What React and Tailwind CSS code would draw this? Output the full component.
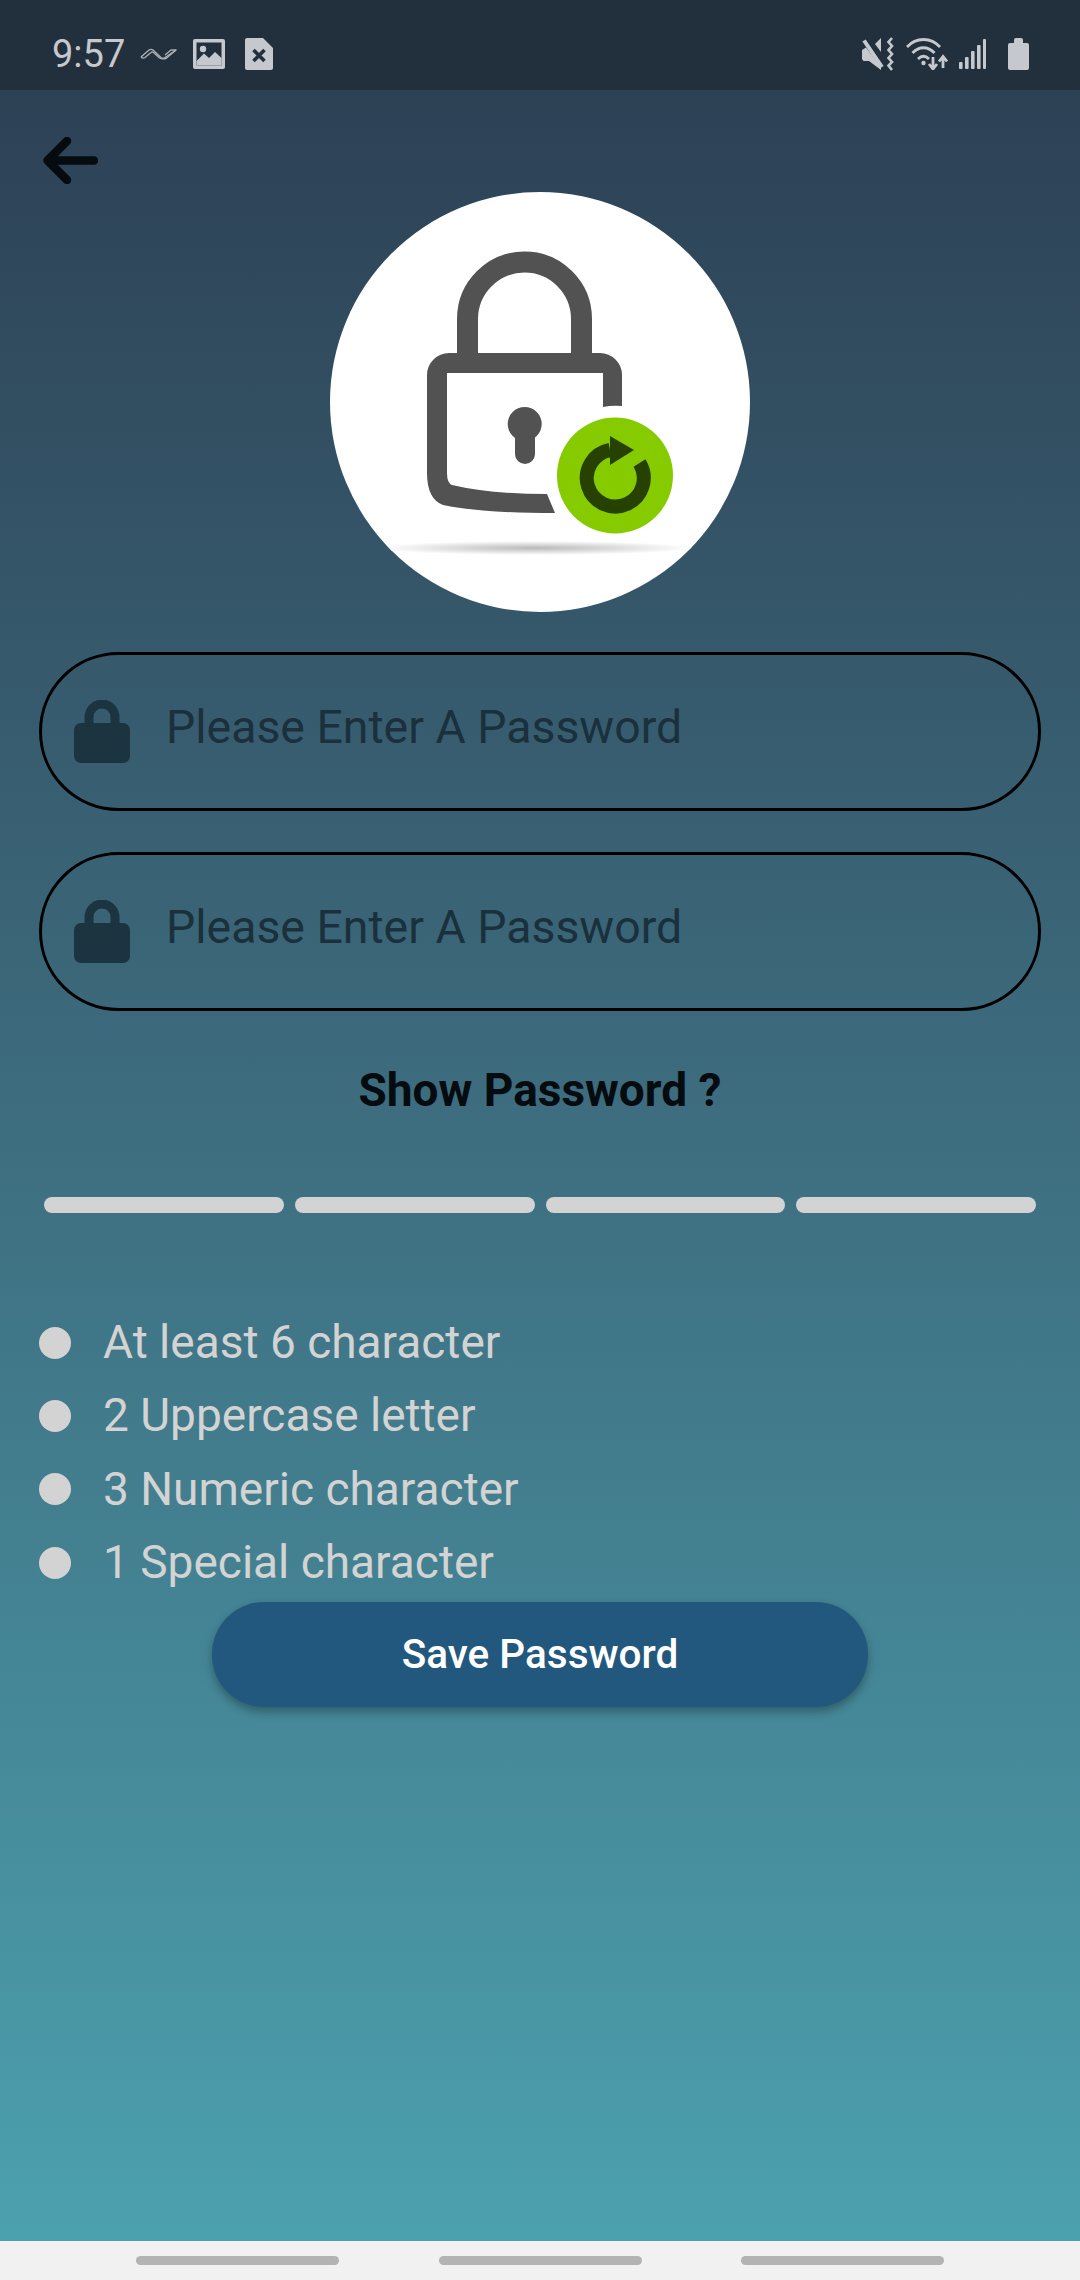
const RULES = ['At least 6 character', '2 Uppercase letter', '3 Numeric character', '1 Special character'];

function WaveIcon() {
  return (
    <svg width="37" height="12" viewBox="0 0 37 12" fill="none" stroke="#a9afb4" strokeWidth="1.4" strokeLinejoin="round">
      <path d="M1 9 L9 2 Q11 0.8 13 2 L21 9.5 Q23 11 25 9.5 L36 2" />
      <path d="M1 9 Q3 11 5 9.5 L11 4.5 Q12 3.6 13.5 4.5 L19.5 10 Q22 11.5 26 10.5 L36 2 H31 L25 7" />
    </svg>
  );
}

function ImageIcon() {
  return (
    <svg width="32" height="30" viewBox="0 0 32 30">
      <rect width="32" height="30" rx="2" fill="#c5c9cd" />
      <rect x="3.5" y="3.5" width="25" height="23" fill="#222f3e" />
      <circle cx="10" cy="10" r="3.2" fill="#c5c9cd" />
      <path d="M3.5 22 L11 14.5 L16 19 L22 13 L28.5 19 V26.5 H3.5 Z" fill="#c5c9cd" />
    </svg>
  );
}

function FileXIcon() {
  return (
    <svg width="28" height="32" viewBox="0 0 28 32">
      <path d="M2 0 H18 L28 10 V30 a2 2 0 0 1 -2 2 H2 a2 2 0 0 1 -2 -2 V2 a2 2 0 0 1 2 -2 Z" fill="#c5c9cd" />
      <path d="M8.5 12 L19.5 23 M19.5 12 L8.5 23" stroke="#222f3e" strokeWidth="3.6" />
    </svg>
  );
}

function MuteIcon() {
  return (
    <svg width="32" height="34" viewBox="0 0 32 34" fill="none">
      <path d="M0 13 L4 10.5 L19 30 V33 L7 24 H1.5 L0 22 Z" fill="#c5c9cd" />
      <path d="M13 7 L19 1 V15 Z" fill="#c5c9cd" />
      <path d="M2 3.5 L20 30" stroke="#c5c9cd" strokeWidth="4" />
      <path d="M30 1 L26.5 5 L30 9 L26.5 13 L30 17 L26.5 21 L30 25 L26.5 28.5 L30 33" stroke="#c5c9cd" strokeWidth="2.6" />
    </svg>
  );
}

function WifiIcon() {
  return (
    <svg width="42" height="32" viewBox="0 0 42 32" fill="none" stroke="#c5c9cd" strokeWidth="2.8">
      <path d="M1 9 C10 -1 25 -1 34 9" />
      <path d="M6.5 15 C13 8 22 8 28.5 15" />
      <path d="M12 21 C15.5 17.5 19.5 17.5 23 21" />
      <circle cx="17.5" cy="25" r="2.2" fill="#c5c9cd" stroke="none" />
      <path d="M27 19 V30 M23 26 L27 31 L31 26" />
      <path d="M37 30 V20 M33 23.5 L37 18.5 L41 23.5" />
    </svg>
  );
}

function SignalIcon() {
  return (
    <svg width="27" height="30" viewBox="0 0 27 30" fill="#c5c9cd">
      <rect x="0" y="23" width="3.6" height="7" rx="1" />
      <rect x="6" y="18" width="3.6" height="12" rx="1" />
      <rect x="12" y="12" width="3.6" height="18" rx="1" />
      <rect x="18" y="6" width="3.6" height="24" rx="1" />
      <rect x="24" y="0" width="3" height="30" rx="1" />
    </svg>
  );
}

function BatteryIcon() {
  return (
    <svg width="21" height="32" viewBox="0 0 21 32" fill="#c5c9cd">
      <path d="M6 2 a2 2 0 0 1 2 -2 H13 a2 2 0 0 1 2 2 V5 H19 a2 2 0 0 1 2 2 V30 a2 2 0 0 1 -2 2 H2 a2 2 0 0 1 -2 -2 V7 a2 2 0 0 1 2 -2 H6 Z" />
    </svg>
  );
}

function BackArrow() {
  return (
    <svg width="55" height="47" viewBox="0 0 55 47" fill="none" stroke="#050b0f" strokeWidth="8.5" strokeLinecap="round" strokeLinejoin="round">
      <path d="M51 23.5 H5 M24 4 L4.5 23.5 L24 43" />
    </svg>
  );
}

function LockLogo() {
  return (
    <svg width="420" height="420" viewBox="0 0 420 420">
      <defs>
        <radialGradient id="floor">
          <stop offset="0" stopColor="#b9b9b9" />
          <stop offset="1" stopColor="#ffffff" />
        </radialGradient>
      </defs>
      <ellipse cx="205" cy="356" rx="158" ry="7" fill="url(#floor)" />
      <path d="M137.5 165 V127 A57 57 0 0 1 251.5 127 V165" fill="none" stroke="#525252" strokeWidth="21" />
      <path
        d="M97 183 a22 22 0 0 1 22 -22 H270 a22 22 0 0 1 22 22 V214 Q282 213 273 215 V181 H117 V281 Q117 291 122 293 Q160 302 217 302 L225 321 Q150 321 113 313 Q97 307 97 281 Z"
        fill="#525252"
      />
      <circle cx="194.7" cy="232" r="17" fill="#525252" />
      <rect x="185" y="232" width="20" height="40" rx="10" fill="#525252" />
      <circle cx="285" cy="283.5" r="58" fill="#86cb00" />
      <path d="M280 258 A28.5 28.5 0 1 0 309.5 271" fill="none" stroke="#274200" strokeWidth="14" />
      <path d="M280 244 L304 258 L280 273 Z" fill="#274200" />
    </svg>
  );
}

function SmallLock() {
  return (
    <svg width="56" height="63" viewBox="0 0 56 63" fill="#1c3340">
      <path d="M15 26 V17 A13 13 0 0 1 41 17 V26" fill="none" stroke="#1c3340" strokeWidth="9" />
      <rect x="0" y="23" width="56" height="40" rx="7" />
    </svg>
  );
}

function PasswordField() {
  return (
    <div className="h-[159px] rounded-[80px] border-[3px] border-black flex items-center pl-[32px]">
      <SmallLock />
      <span className="ml-[36px] text-[46.4px] text-[#1a303c] -mt-[7px]">Please Enter A Password</span>
    </div>
  );
}

export default function App() {
  return (
    <div className="w-[1080px] h-[2280px] flex flex-col font-['Roboto',sans-serif]">
      {/* status bar */}
      <div className="h-[90px] shrink-0 bg-[#222f3d] flex items-center justify-between pt-[18px] pl-[52px] pr-[51px]">
        <div className="flex items-center">
          <span className="text-[38px] leading-none text-[#c5c9cd] w-[74px]">9:57</span>
          <span className="ml-[14px] flex"><WaveIcon /></span>
          <span className="ml-[16px] flex"><ImageIcon /></span>
          <span className="ml-[20px] flex"><FileXIcon /></span>
        </div>
        <div className="flex items-center">
          <MuteIcon />
          <span className="ml-[12px] flex"><WifiIcon /></span>
          <span className="ml-[11px] flex"><SignalIcon /></span>
          <span className="ml-[22px] flex"><BatteryIcon /></span>
        </div>
      </div>

      <main className="flex-1 bg-gradient-to-b from-[#2d4155] to-[#4ca1af] px-[39px] flex flex-col">
        <div className="pt-[47px] pl-[4px] flex">
          <BackArrow />
        </div>
        <div className="mt-[8px] self-center w-[420px] h-[420px] rounded-full bg-white overflow-hidden">
          <LockLogo />
        </div>

        <div className="mt-[40px] flex flex-col gap-[41px]">
          <PasswordField />
          <PasswordField />
        </div>

        <p className="mt-[50px] text-center text-[46px] leading-[58px] font-bold text-[#050b0f]">Show Password ?</p>

        <div className="mt-[78px] ml-[5px] mr-[5px] flex gap-[11px]">
          <div className="flex-1 h-[16px] rounded-lg bg-[#d3d3d3]"></div>
          <div className="flex-1 h-[16px] rounded-lg bg-[#d3d3d3]"></div>
          <div className="flex-1 h-[16px] rounded-lg bg-[#d3d3d3]"></div>
          <div className="flex-1 h-[16px] rounded-lg bg-[#d3d3d3]"></div>
        </div>

        <ul className="mt-[93px]">
          {RULES.map((rule) => (
            <li key={rule} className="h-[73.3px] flex items-center text-[46px] text-[#d3d3d3]">
              <span className="w-[32px] h-[32px] rounded-full bg-[#d3d3d3] shrink-0"></span>
              <span className="ml-[32px]">{rule}</span>
            </li>
          ))}
        </ul>

        <button className="mt-[3px] self-center w-[656px] h-[105px] rounded-[52px] bg-[#22587e] text-white text-[40.5px] font-medium shadow-[0_5px_10px_rgba(0,0,0,0.3)]">
          Save Password
        </button>
      </main>

      {/* nav bar */}
      <div className="h-[39px] shrink-0 bg-[#f1f1f1] flex justify-between items-start pt-[15px] pl-[136px] pr-[136px]">
        <div className="w-[203px] h-[9px] rounded-full bg-[#b3b3b3]"></div>
        <div className="w-[203px] h-[9px] rounded-full bg-[#b3b3b3]"></div>
        <div className="w-[203px] h-[9px] rounded-full bg-[#b3b3b3]"></div>
      </div>
    </div>
  );
}
